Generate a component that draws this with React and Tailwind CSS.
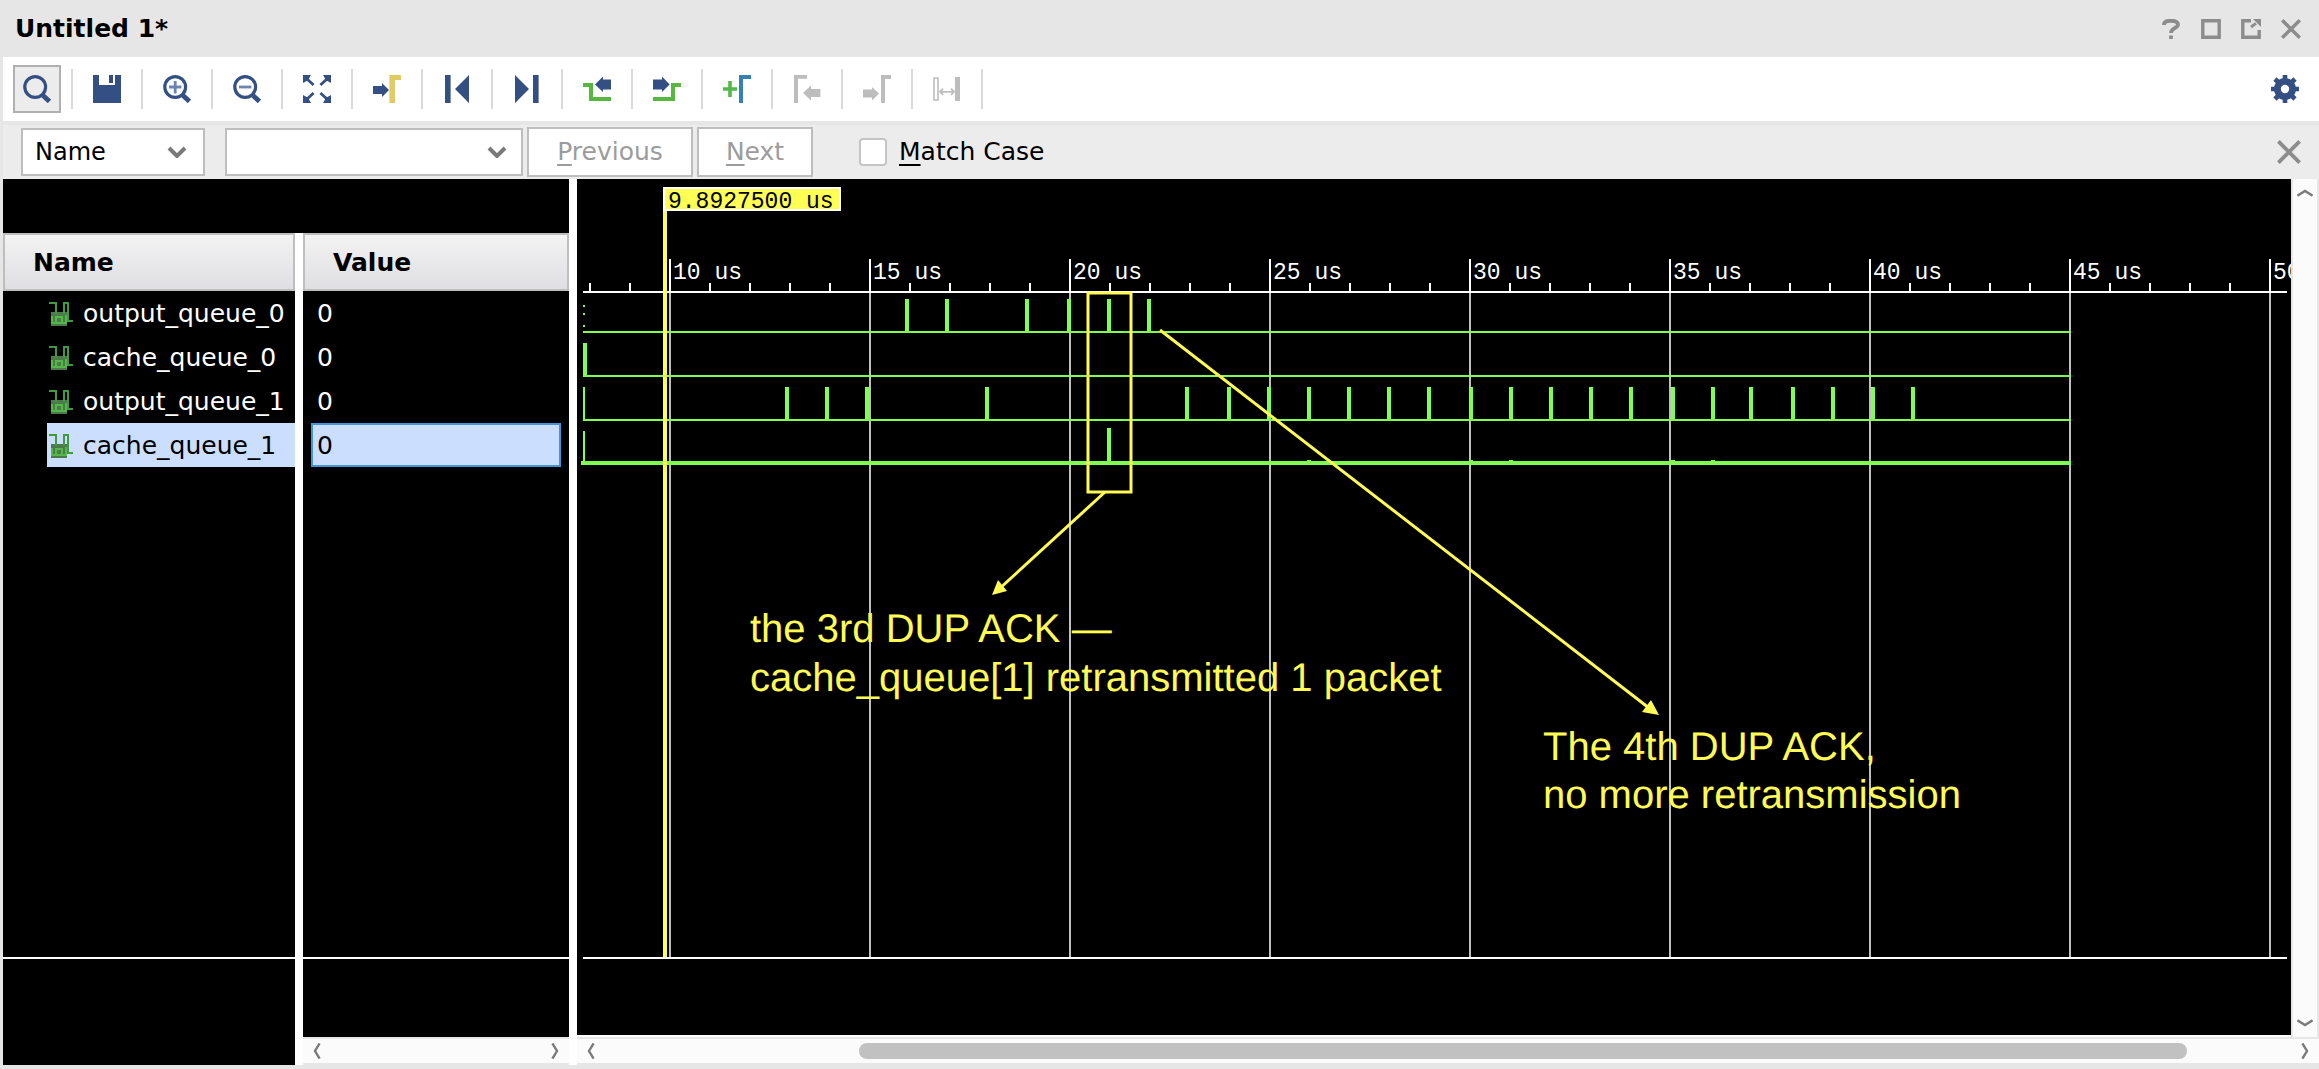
const NAVY = '#334f83';
const GREEN = '#54b848';
const GRAY = '#bdbdbd';
const WAVE = '#7fff50';
const NOTE = '#fffb54';

function Icon({ children }) {
  return (
    <svg viewBox="0 0 14 14" className="size-7 shrink-0" fill="none" aria-hidden="true">
      {children}
    </svg>
  );
}

function Lens({ children }) {
  return (
    <Icon>
      <circle cx="6.1" cy="6" r="5.2" stroke={NAVY} strokeWidth="1.6" />
      <path d="M10 10.2l3.2 3" stroke={NAVY} strokeWidth="2.4" />
      {children}
    </Icon>
  );
}

const TOOLS = [
  {
    label: 'Save',
    icon: (
      <Icon>
        <path d="M0 0h3v5h8V0h3v14H0zM8 0h2v4H8z" fill={NAVY} />
      </Icon>
    ),
  },
  {
    label: 'Zoom in',
    icon: (
      <Lens>
        <path d="M3 6h6.2M6.1 3v6.2" stroke="#6c84ae" strokeWidth="1.4" />
      </Lens>
    ),
  },
  {
    label: 'Zoom out',
    icon: (
      <Lens>
        <path d="M3 6h6.2" stroke="#6c84ae" strokeWidth="1.4" />
      </Lens>
    ),
  },
  {
    label: 'Zoom fit',
    icon: (
      <Icon>
        <path d="M0 0h4L3 1.8V3H1.8L0 4zM14 0v4l-1.8-1H11V1.8L10 0zM0 14v-4l1.8 1H3v1.2L4 14zM14 14h-4l1-1.8V11h1.2L14 10z" fill={NAVY} />
        <path d="M2 2l3.3 3M12 2L8.7 5M2 12l3.3-3M12 12L8.7 9" stroke={NAVY} strokeWidth="1.4" />
      </Icon>
    ),
  },
  {
    label: 'Go to cursor',
    icon: (
      <Icon>
        <path d="M0 5.5h4.5V4L8 7.5 4.5 11V9.5H0z" fill={NAVY} />
        <path d="M8.2 0H14v2.5h-3V14H8.2z" fill="#e0cb66" />
      </Icon>
    ),
  },
  {
    label: 'Go to time 0',
    icon: (
      <Icon>
        <path d="M1 0h2.8v14H1zM13 0v14L6 7z" fill={NAVY} />
      </Icon>
    ),
  },
  {
    label: 'Go to last time',
    icon: (
      <Icon>
        <path d="M1 0v14l7-7zM10 0h2.8v14H10z" fill={NAVY} />
      </Icon>
    ),
  },
  {
    label: 'Previous transition',
    icon: (
      <Icon>
        <path d="M0 5h4v7h10" stroke="#56b83f" strokeWidth="2" />
        <path d="M14 2.2h-4V.8L6 4.7l4 3.8V7.2h4z" fill={NAVY} />
      </Icon>
    ),
  },
  {
    label: 'Next transition',
    icon: (
      <Icon>
        <path d="M0 12h10V5h4" stroke="#56b83f" strokeWidth="2" />
        <path d="M0 2.2h4.5V.8l3.8 3.9-3.8 3.8V7.2H0z" fill={NAVY} />
      </Icon>
    ),
  },
  {
    label: 'Add marker',
    icon: (
      <Icon>
        <path d="M0 7h7M3.5 3v8" stroke={GREEN} strokeWidth="1.8" />
        <path d="M14 1H9v13" stroke="#3580b5" strokeWidth="2" />
      </Icon>
    ),
  },
  {
    label: 'Previous marker',
    disabled: true,
    icon: (
      <Icon>
        <path d="M7 .9H1.5V14" stroke={GRAY} strokeWidth="2" />
        <path d="M13.7 7H9V5.3L5 9l4 3.7V11h4.7z" fill={GRAY} />
      </Icon>
    ),
  },
  {
    label: 'Next marker',
    disabled: true,
    icon: (
      <Icon>
        <path d="M14 1h-4v13" stroke={GRAY} strokeWidth="2" />
        <path d="M0 7.3h4.5V6L8 9.3l-3.5 3.4v-1.4H0z" fill={GRAY} />
      </Icon>
    ),
  },
  {
    label: 'Swap markers',
    disabled: true,
    icon: (
      <Icon>
        <path d="M.5 1.5h2v11h-2z" stroke={GRAY} strokeWidth=".8" />
        <path d="M11 1h2.5v12H11z" fill={GRAY} />
        <path d="M3.5 8.4h7M5 6.8L3.5 8.4 5 10M9 6.8l1.5 1.6L9 10" stroke={GRAY} strokeWidth=".9" />
      </Icon>
    ),
  },
];

const SIGNALS = [
  { name: 'output_queue_0', value: '0' },
  { name: 'cache_queue_0', value: '0' },
  { name: 'output_queue_1', value: '0' },
  { name: 'cache_queue_1', value: '0', selected: true },
];

// Waveform geometry, in pixels from the left edge and top of the plot.
const MAJORS = [10, 15, 20, 25, 30, 35, 40, 45, 50].map((t) => ({ t, x: 88 + (t - 10) * 40 }));
const MINORS = Array.from({ length: 42 }, (_, i) => 8 + i * 40).filter((x) => (x - 88) % 200 !== 0);
const PULSES_0 = [324, 364, 444, 486, 526, 566];
const PULSES_2 = [
  204, 244, 284, 404, 604, 646, 686, 726, 766, 806, 846, 888, 928, 968, 1008, 1048, 1090, 1130, 1168, 1210, 1250,
  1290, 1330,
];
const BUMPS = [726, 888, 928, 1090, 1130];

function TitleIcon({ label, children }) {
  return (
    <button type="button" aria-label={label} className="size-5 text-[#8c8c8c]">
      <svg viewBox="0 0 10 10" className="size-5" fill="none" stroke="currentColor" aria-hidden="true">
        {children}
      </svg>
    </button>
  );
}

function Chevron({ className, d = 'M1 1l4 4 4-4', box = '0 0 10 6', width = 2 }) {
  return (
    <svg viewBox={box} className={className} fill="none" stroke="#7a7a7a" strokeWidth={width} aria-hidden="true">
      <path d={d} />
    </svg>
  );
}

function SignalIcon() {
  return (
    <svg viewBox="0 0 12 12" className="size-6 shrink-0" fill="none" aria-hidden="true">
      <path d="M1 5h8v7H1z" fill="#4d7a4a" />
      <path d="M0 .5h3.5V6M7.500 6V.5h2v9H12" stroke="#3f9a43" />
      <path d="M1.5 11V7M8.5 11V6.5M1.5 10.5h2M6.5 10.5h2M3.5 7.5h3v3h-3z" stroke={GREEN} />
    </svg>
  );
}

function HScroll({ children, label }) {
  return (
    <div className="flex h-7 items-center justify-between border-t-2 border-b-2 border-[#e6e6e6] bg-[#fbfbfb] px-2.5" role="group" aria-label={label}>
      <button type="button" aria-label="Scroll left">
        <Chevron className="h-4 w-2" box="0 0 4 8" d="M3.3 .2L1 4l2.3 3.8" width={1.2} />
      </button>
      {children}
      <button type="button" aria-label="Scroll right">
        <Chevron className="h-4 w-2" box="0 0 4 8" d="M.7 .2L3 4 .7 7.8" width={1.2} />
      </button>
    </div>
  );
}

function Waveform() {
  return (
    <svg className="block h-full w-full overflow-visible" shapeRendering="crispEdges" role="img" aria-label="Waveforms">
      {MAJORS.map(({ t, x }) => (
        <line key={t} x1={x + 1} x2={x + 1} y1="114" y2="100%" stroke="#bfbfbf" strokeWidth="2" />
      ))}
      {MAJORS.map(({ t, x }) => (
        <rect key={t} x={x} y="80" width="2" height="32" fill="#fff" />
      ))}
      {MINORS.map((x) => (
        <rect key={x} x={x} y="104" width="2" height="8" fill="#fff" />
      ))}
      <line x1="2" x2="100%" y1="113" y2="113" stroke="#fff" strokeWidth="2" />
      <g fill="#fff" fontFamily="'Liberation Mono', monospace" fontSize="23">
        {MAJORS.map(({ t, x }) => (
          <text key={t} x={x + 4} y="100">
            {t + ' us'}
          </text>
        ))}
      </g>
      <g fill={WAVE}>
        <rect x="2" y="126" width="2" height="2" />
        <rect x="2" y="134" width="2" height="2" />
        <rect x="2" y="146" width="2" height="2" />
        <rect x="2" y="152" width="1488" height="2" />
        {PULSES_0.map((x) => (
          <rect key={x} x={x} y="120" width="4" height="33" />
        ))}
        <rect x="2" y="164" width="4" height="33" />
        <rect x="2" y="196" width="1488" height="2" />
        <rect x="2" y="208" width="2" height="33" />
        <rect x="2" y="240" width="1488" height="2" />
        {PULSES_2.map((x) => (
          <rect key={x} x={x} y="208" width="4" height="33" />
        ))}
        <rect x="2" y="252" width="2" height="31" />
        <rect x="0" y="282" width="1490" height="4" />
        <rect x="526" y="249" width="4" height="34" />
        {BUMPS.map((x) => (
          <rect key={x} x={x} y="281" width="4" height="2" />
        ))}
      </g>
      <line x1="84" x2="84" y1="32" y2="100%" stroke="#ffff54" strokeWidth="4" />
      <rect x="83" y="9" width="176" height="22" fill="#ffff54" stroke="#fff" strokeWidth="2" />
      <text x="87" y="29" fontFamily="'Liberation Mono', monospace" fontSize="23" fill="#000">
        9.8927500 us
      </text>
      <g shapeRendering="geometricPrecision" stroke={NOTE} strokeWidth="3">
        <rect x="507" y="114" width="43" height="199" fill="none" />
        <path d="M524 313L417 411" />
        <path d="M579 151L1068 529" />
        <path d="M411 416l6-15 9 11zM1078 536l-8-15-9 12z" fill={NOTE} stroke="none" />
      </g>
      <g fill={NOTE} fontFamily="'Liberation Sans', Arial, sans-serif" fontSize="40" textRendering="geometricPrecision">
        <text x="169" y="463">the 3rd DUP ACK —</text>
        <text x="169" y="512">cache_queue[1] retransmitted 1 packet</text>
        <text x="962" y="581">The 4th DUP ACK,</text>
        <text x="962" y="629">no more retransmission</text>
      </g>
    </svg>
  );
}

export default function App() {
  return (
    <div className="flex h-screen flex-col overflow-hidden bg-[#e6e6e6] pb-1 pl-[3px] font-['DejaVu_Sans',sans-serif] text-[25px] leading-8 text-black">
      <header className="flex h-[57px] shrink-0 items-center justify-between pr-[18px] pl-3">
        <h1 className="leading-7 font-bold">Untitled 1*</h1>
        <div className="flex gap-5">
          <TitleIcon label="Help">
            <path d="M1.5 3C1.5 1.2 3 .9 5 .9s3.5.5 3.5 2C8.5 4.5 5 4.6 5 7M5 8.2V10" strokeWidth="1.9" />
          </TitleIcon>
          <TitleIcon label="Maximize">
            <path d="M.9.9h8.2v8.2H.9z" strokeWidth="1.7" />
          </TitleIcon>
          <TitleIcon label="Float">
            <path d="M5 .9H.9v8.2h8.2V5.5" strokeWidth="1.7" />
            <path d="M5 4l2.5-1.8" strokeWidth="1.5" />
            <path d="M6 0h4v4z" fill="currentColor" stroke="none" />
          </TitleIcon>
          <TitleIcon label="Close">
            <path d="M.6.6l8.800 8.800M9.400.6L.6 9.400" strokeWidth="1.7" />
          </TitleIcon>
        </div>
      </header>

      <div className="flex h-16 shrink-0 items-center bg-white pl-2.5" role="toolbar" aria-label="Waveform tools">
        <button type="button" aria-label="Find" className="flex size-12 items-center justify-center border-2 border-[#b0b0b0] bg-[#ececec]">
          <Lens />
        </button>
        {TOOLS.map((tool) => (
          <div key={tool.label} className="flex items-center">
            <span className="mx-2.5 h-10 w-0.5 bg-[#dadada]" />
            <button type="button" aria-label={tool.label} disabled={tool.disabled} className="flex size-12 items-center justify-center">
              {tool.icon}
            </button>
          </div>
        ))}
        <span className="mx-2.5 h-10 w-0.5 bg-[#dadada]" />
        <button type="button" aria-label="Settings" className="mr-5 ml-auto">
          <Icon>
            <circle cx="7" cy="7" r="3.8" stroke={NAVY} strokeWidth="3.4" />
            <path d="M7 0v2M7 12v2M0 7h2M12 7h2M2 2l1.5 1.5M10.5 10.5L12 12M12 2l-1.5 1.5M3.5 10.5L2 12" stroke={NAVY} strokeWidth="2.3" />
          </Icon>
        </button>
      </div>

      <div className="mt-1 flex h-[54px] shrink-0 items-center bg-[#ececec] pl-[18px]">
        <div className="relative">
          <select aria-label="Search field" defaultValue="Name" className="block h-12 w-46 appearance-none border-2 border-[#bebebe] bg-white pl-3 text-2xl">
            <option>Name</option>
          </select>
          <Chevron className="pointer-events-none absolute top-[18px] right-[18px] h-3 w-5" />
        </div>
        <div className="relative ml-5">
          <input type="text" aria-label="Search text" className="block h-12 w-[298px] border-2 border-[#bebebe] bg-white px-3" />
          <Chevron className="pointer-events-none absolute top-[18px] right-4 h-3 w-5" />
        </div>
        <button type="button" disabled className="ml-1 h-[50px] w-[166px] border-2 border-[#bebebe] bg-white text-[#9c9c9c]">
          <span className="underline decoration-2 underline-offset-4">P</span>revious
        </button>
        <button type="button" disabled className="ml-1 h-[50px] w-[116px] border-2 border-[#bebebe] bg-white text-[#9c9c9c]">
          <span className="underline decoration-2 underline-offset-4">N</span>ext
        </button>
        <label className="ml-[46px] flex items-center gap-3">
          <input type="checkbox" className="size-7 appearance-none rounded-sm border-2 border-[#c4c4c4] bg-white" />
          <span>
            <span className="underline decoration-2 underline-offset-4">M</span>atch Case
          </span>
        </label>
        <button type="button" aria-label="Close find bar" className="mr-[18px] ml-auto">
          <svg viewBox="0 0 12 12" className="size-6" stroke="#8c8c8c" strokeWidth="1.9" aria-hidden="true">
            <path d="M.7.7l10.600 10.600M11.300.7L.7 11.300" />
          </svg>
        </button>
      </div>

      <main className="flex min-h-0 flex-1 bg-white">
        <div className="flex w-[566px] shrink-0 flex-col">
          <div className="h-[54px] shrink-0 bg-black" />
          <div className="flex min-h-0 flex-1 gap-2">
            <section className="flex w-[292px] flex-col bg-black text-white">
              <table className="w-full border-separate border-spacing-0">
                <thead>
                  <tr>
                    <th className="h-[58px] border-2 border-[#bebebe] bg-linear-to-b from-[#f3f3f3] to-[#dfdfe3] p-0 pt-0.5 pl-7 text-left font-bold text-black">Name</th>
                  </tr>
                </thead>
                <tbody>
                  {SIGNALS.map((s) => (
                    <tr key={s.name}>
                      <td className="h-11 p-0 pl-11">
                        <div className={s.selected ? 'flex h-11 items-center gap-2.5 bg-[#cbdefe] pt-0.5 pl-0.5 text-black' : 'flex h-11 items-center gap-2.5 pt-0.5 pl-0.5'}>
                          <SignalIcon />
                          {s.name}
                        </div>
                      </td>
                    </tr>
                  ))}
                </tbody>
              </table>
              <div className="flex-1" />
              <div className="h-[108px] shrink-0 border-t-2 border-white" />
            </section>
            <section className="flex flex-1 flex-col bg-black text-white">
              <table className="w-full border-separate border-spacing-0">
                <thead>
                  <tr>
                    <th className="h-[58px] border-2 border-[#bebebe] bg-linear-to-b from-[#f3f3f3] to-[#dfdfe3] p-0 pt-0.5 pl-7 text-left font-bold text-black">Value</th>
                  </tr>
                </thead>
                <tbody>
                  {SIGNALS.map((s) => (
                    <tr key={s.name}>
                      <td className="h-11 p-0 px-2">
                        <div className={s.selected ? 'flex h-11 items-center border-2 border-[#4096d8] bg-[#cbdefe] pt-0.5 pl-1 text-black' : 'flex h-11 items-center pt-0.5 pl-1.5'}>
                          {s.value}
                        </div>
                      </td>
                    </tr>
                  ))}
                </tbody>
              </table>
              <div className="flex-1" />
              <div className="h-20 shrink-0 border-t-2 border-white" />
              <HScroll label="Value scroll bar" />
            </section>
          </div>
        </div>

        <section className="ml-2 flex min-w-0 flex-1 flex-col">
          <div className="flex min-h-0 flex-1">
            <div className="flex min-w-0 flex-1 flex-col overflow-hidden border-b-2 border-white bg-black px-1">
              <div className="min-h-0 flex-1">
                <Waveform />
              </div>
              <div className="ml-0.5 h-0.5 shrink-0 bg-white" />
              <div className="h-[76px] shrink-0" />
            </div>
            <div className="flex w-7 shrink-0 flex-col items-center justify-between border-x-2 border-[#e6e6e6] bg-[#fbfbfb] py-2.5">
              <button type="button" aria-label="Scroll up">
                <Chevron className="block h-2 w-4" box="0 0 8 4" d="M.2 3.3L4 1l3.8 2.3" width={1.2} />
              </button>
              <button type="button" aria-label="Scroll down">
                <Chevron className="block h-2 w-4" box="0 0 8 4" d="M.2 .7L4 3 7.8 .7" width={1.2} />
              </button>
            </div>
          </div>
          <HScroll label="Waveform scroll bar">
            <div className="flex flex-1">
              <span className="flex-[264]" />
              <span className="h-4 flex-[1328] rounded-full bg-[#c1c1c1]" />
              <span className="flex-[114]" />
            </div>
          </HScroll>
        </section>
      </main>
    </div>
  );
}
